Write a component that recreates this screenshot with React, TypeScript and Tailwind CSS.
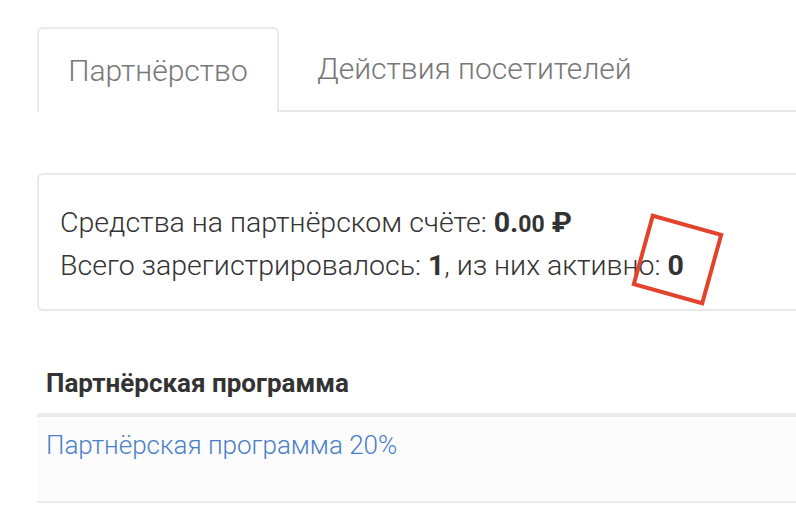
export default function App() {
  return (
    <div className="relative w-[796px] h-[532px] overflow-hidden bg-white font-['Roboto',sans-serif] text-[#333]">
      <div className="w-[900px] pl-[37px] pt-[27px]">
        {/* tabs */}
        <div className="flex border-b-2 border-[#e9e9e9]">
          <div className="-mb-[2px] h-[85px] w-[242px] rounded-t-[6px] border-2 border-b-0 border-[#e9e9e9] bg-white flex items-center justify-center text-[30px] font-light text-[#777]">
            Партнёрство
          </div>
          <div className="h-[83px] pl-[38px] flex items-center text-[30px] font-light text-[#777]">
            Действия посетителей
          </div>
        </div>

        {/* balance */}
        <div className="mt-[61px] h-[138px] rounded-[6px] border-2 border-[#e9e9e9] pl-[21px] pt-[27px] text-[28.5px] font-light leading-[41px]">
          <div>
            Средства на партнёрском счёте: <b className="font-bold">0.</b>
            <b className="font-bold text-[23px]">00</b> <b className="font-bold">₽</b>
          </div>
          <div>
            Всего зарегистрировалось: <b className="font-bold">1</b>, из них активно: <b className="font-bold">0</b>
          </div>
        </div>

        {/* programs table */}
        <div className="mt-[52px]">
          <div className="h-[50px] pb-[9px] pl-[9px] flex items-center text-[26px] font-bold">Партнёрская программа</div>
          <div className="h-[90px] border-t-[4px] border-b-2 border-[#ececec] bg-[#fcfcfc] pl-[9px] pt-[9px] leading-[38px]">
            <a className="text-[26px] font-light text-[#4a7fc8]">Партнёрская программа 20%</a>
          </div>
        </div>
      </div>

      {/* annotation */}
      <div className="absolute left-[640px] top-[222px] w-[75px] h-[75px] rotate-[15.5deg] border-4 border-[#e2432c]" />
    </div>
  )
}
